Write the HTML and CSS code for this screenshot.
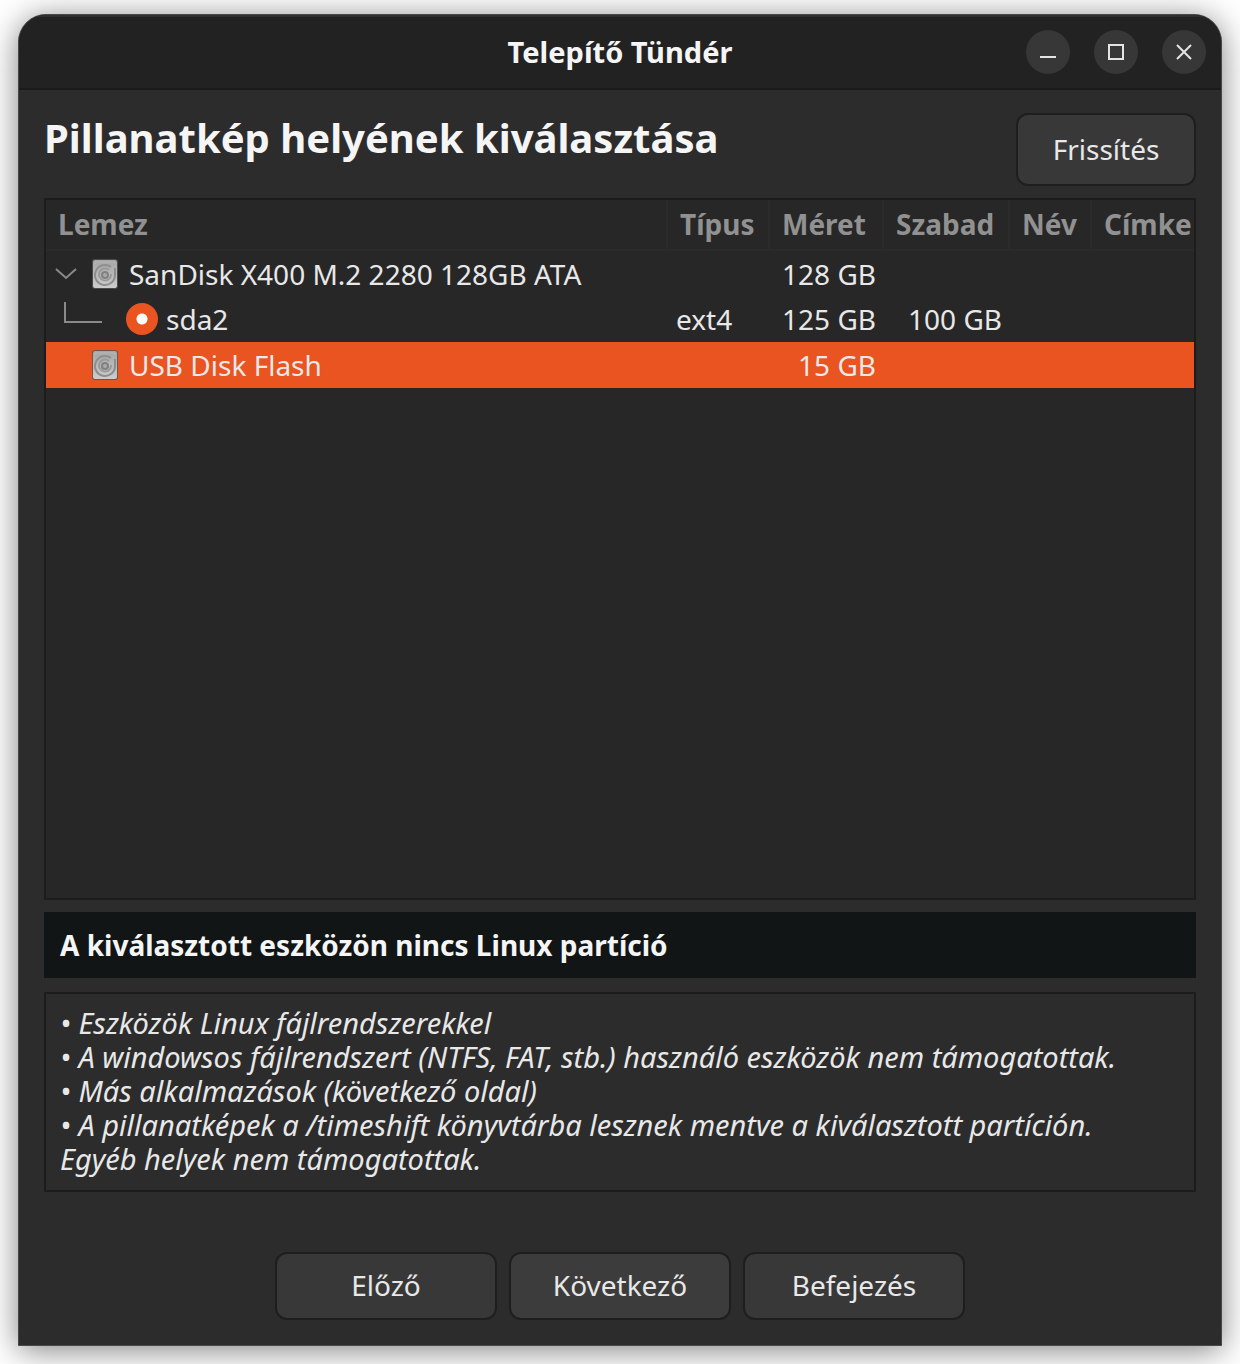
FILE: index.html
```
<!DOCTYPE html>
<html lang="hu">
<head>
	<meta charset="utf-8">
	<meta name="viewport" content="width=device-width, initial-scale=1">
	<title>Telepítő Tündér</title>
	<link rel="stylesheet" href="styles.css">
</head>
<body>

	<svg width="0" height="0" class="defs" aria-hidden="true">
		<linearGradient id="metal" x1="0" y1="0" x2="0" y2="1">
			<stop offset="0" stop-color="#a5a5a5"/>
			<stop offset="1" stop-color="#cdcdcd"/>
		</linearGradient>
		<symbol id="disk" viewBox="0 0 28 32">
			<rect x="1" y="1" width="26" height="30" rx="3" fill="#555" opacity=".8"/>
			<rect x="2" y="2" width="24" height="28" rx="2" fill="url(#metal)"/>
			<path d="M4 6v-2h20v2" fill="none" stroke="#b8b8b8"/>
			<path d="M20 9a10 10 0 1 0 4 8v-7" fill="none" stroke="#8e8e8e" stroke-width="2"/>
			<path d="M18 12a6 6 0 1 0 2 4" fill="none" stroke="#999" stroke-width="2"/>
			<circle cx="14" cy="17" r="3" fill="#aaa" stroke="#808080" stroke-width="2"/>
		</symbol>
	</svg>

	<div class="window">
		<header class="titlebar">
			<h1>Telepítő Tündér</h1>
			<div class="controls">
				<button type="button" aria-label="Kis méret"><svg width="20" height="20" viewBox="0 0 20 20"><path d="M2 15h16"/></svg></button>
				<button type="button" aria-label="Teljes méret"><svg width="20" height="20" viewBox="0 0 20 20"><path d="M3 3h14v14H3z"/></svg></button>
				<button type="button" aria-label="Bezárás"><svg width="20" height="20" viewBox="0 0 20 20"><path d="M3 3l14 14M17 3L3 17"/></svg></button>
			</div>
		</header>

		<main class="content">
			<div class="top">
				<h2>Pillanatkép helyének kiválasztása</h2>
				<button type="button" class="btn refresh">Frissítés</button>
			</div>

			<div class="list">
				<table>
					<colgroup>
						<col><col class="c-type"><col class="c-size"><col class="c-free"><col class="c-name"><col class="c-label">
					</colgroup>
					<thead>
						<tr><th>Lemez</th><th>Típus</th><th>Méret</th><th>Szabad</th><th>Név</th><th>Címke</th></tr>
					</thead>
					<tbody>
						<tr>
							<td>
								<div class="disk">
									<button type="button" class="expander" aria-label="Összecsukás"><svg width="22" height="14" viewBox="0 0 22 14"><path d="M1 2l10 9L21 2"/></svg></button>
									<svg class="icon" width="28" height="32"><use href="#disk"/></svg>
									<span>SanDisk X400 M.2 2280 128GB ATA</span>
								</div>
							</td>
							<td></td><td class="num">128 GB</td><td></td><td></td><td></td>
						</tr>
						<tr>
							<td>
								<div class="disk part">
									<svg class="branch" width="38" height="24" viewBox="0 0 38 24"><path d="M1 0v20h37"/></svg>
									<input type="radio" name="device" id="sda2" checked>
									<label for="sda2">sda2</label>
								</div>
							</td>
							<td>ext4</td><td class="num">125 GB</td><td class="num">100 GB</td><td></td><td></td>
						</tr>
						<tr class="selected">
							<td>
								<div class="disk">
									<span class="expander"></span>
									<svg class="icon" width="28" height="32"><use href="#disk"/></svg>
									<span>USB Disk Flash</span>
								</div>
							</td>
							<td></td><td class="num">15 GB</td><td></td><td></td><td></td>
						</tr>
					</tbody>
				</table>
			</div>

			<p class="status">A kiválasztott eszközön nincs Linux partíció</p>

			<p class="notes">
				• Eszközök Linux fájlrendszerekkel<br>
				• A windowsos fájlrendszert (NTFS, FAT, stb.) használó eszközök nem támogatottak.<br>
				• Más alkalmazások (következő oldal)<br>
				• A pillanatképek a /timeshift könyvtárba lesznek mentve a kiválasztott partíción.<br>
				Egyéb helyek nem támogatottak.
			</p>

			<div class="actions">
				<button type="button" class="btn">Előző</button>
				<button type="button" class="btn next">Következő</button>
				<button type="button" class="btn">Befejezés</button>
			</div>
		</main>
	</div>

</body>
</html>
```
FILE: styles.css
```
*{box-sizing: border-box;}
body,h1,h2,p{margin: 0;}
body{
	display: flex;
	min-height: 100vh;
	padding: 14px 18px 18px;
	background: white;color: #e8e8e8;
	font-family: "Noto Sans", sans-serif;
	font-size: 28px;line-height: 34px;
}
button{font: inherit;color: inherit;}
.defs{position: absolute;}

.window{
	flex: 1;
	display: flex;flex-direction: column;
	min-width: 0;
	border: 1px solid #484848;
	border-radius: 28px 28px 0 0;
	background: #2c2c2c;
	box-shadow: 0 4px 32px rgba(0,0,0,.5);
	overflow: hidden;
}

.titlebar{
	display: grid;
	grid-template-columns: 1fr auto 1fr;
	align-items: center;
	height: 75px;
	padding: 0 15px 2px;
	background: #222;
	border-top: 2px solid #303030;
	border-bottom: 2px solid #1a1a1a;
}
.titlebar h1{grid-column: 2;color: #f5f5f5;font-size: 29px;}
.controls{display: flex;justify-content: flex-end;gap: 24px;}
.controls button{
	display: flex;align-items: center;justify-content: center;
	width: 44px;height: 44px;
	padding: 0;border: 0;border-radius: 50%;
	background: #373737;
}
.controls path{fill: none;stroke: #e4e4e4;stroke-width: 2;}

.content{
	flex: 1;
	display: flex;flex-direction: column;
	padding: 23px 25px 25px;
}
.top{
	display: flex;justify-content: space-between;align-items: flex-start;
	margin-bottom: 12px;
}
.top h2{color: #f5f5f5;font-size: 40px;line-height: 50px;}

.btn{
	width: 222px;height: 68px;
	padding: 0 0 2px;
	border: 2px solid #1e1e1e;border-radius: 12px;
	background: #383838;
}
.btn.refresh{width: 180px;height: 73px;}
.btn.next{background: #3c3c3c;}

.list{
	flex: 1;
	border: 2px solid #1c1c1c;
	background: #272727;
}
table{width: 100%;border-collapse: collapse;table-layout: fixed;}
.c-type{width: 102px;}
.c-size{width: 114px;}
.c-free{width: 126px;}
.c-name{width: 82px;}
.c-label{width: 103px;}
th{
	height: 50px;
	padding: 0 0 2px 12px;
	border-bottom: 2px solid #2b2b2b;border-right: 2px solid #2b2b2b;
	color: #919191;
	text-align: left;
}
th:last-child{border-right: 0;}
td{height: 46px;padding: 0 7px 0 9px;white-space: nowrap;}
.num{text-align: right;}
.selected{background: #e95420;}

.disk{display: flex;align-items: center;gap: 10px;}
.expander{
	display: flex;align-items: center;
	width: 26px;
	padding: 0;border: 0;
	background: none;
}
.expander path,.branch path{fill: none;stroke: #8a8a8a;stroke-width: 2;}
.part{padding-left: 9px;}
.branch{align-self: flex-start;}
.part input{
	appearance: none;
	width: 32px;height: 32px;
	margin: 0 -2px 0 14px;
	border-radius: 50%;
	background: radial-gradient(circle, white 5px, #e95420 6px);
}

.status{
	margin: 12px 0 14px;
	padding: 16px;
	background: #111516;color: #f5f5f5;
	font-weight: bold;
}
.notes{
	padding: 12px 14px 14px;
	border: 2px solid #1c1c1c;
	font-size: 29px;font-style: italic;
}
.actions{
	display: flex;justify-content: center;gap: 12px;
	margin-top: 60px;
}
```
